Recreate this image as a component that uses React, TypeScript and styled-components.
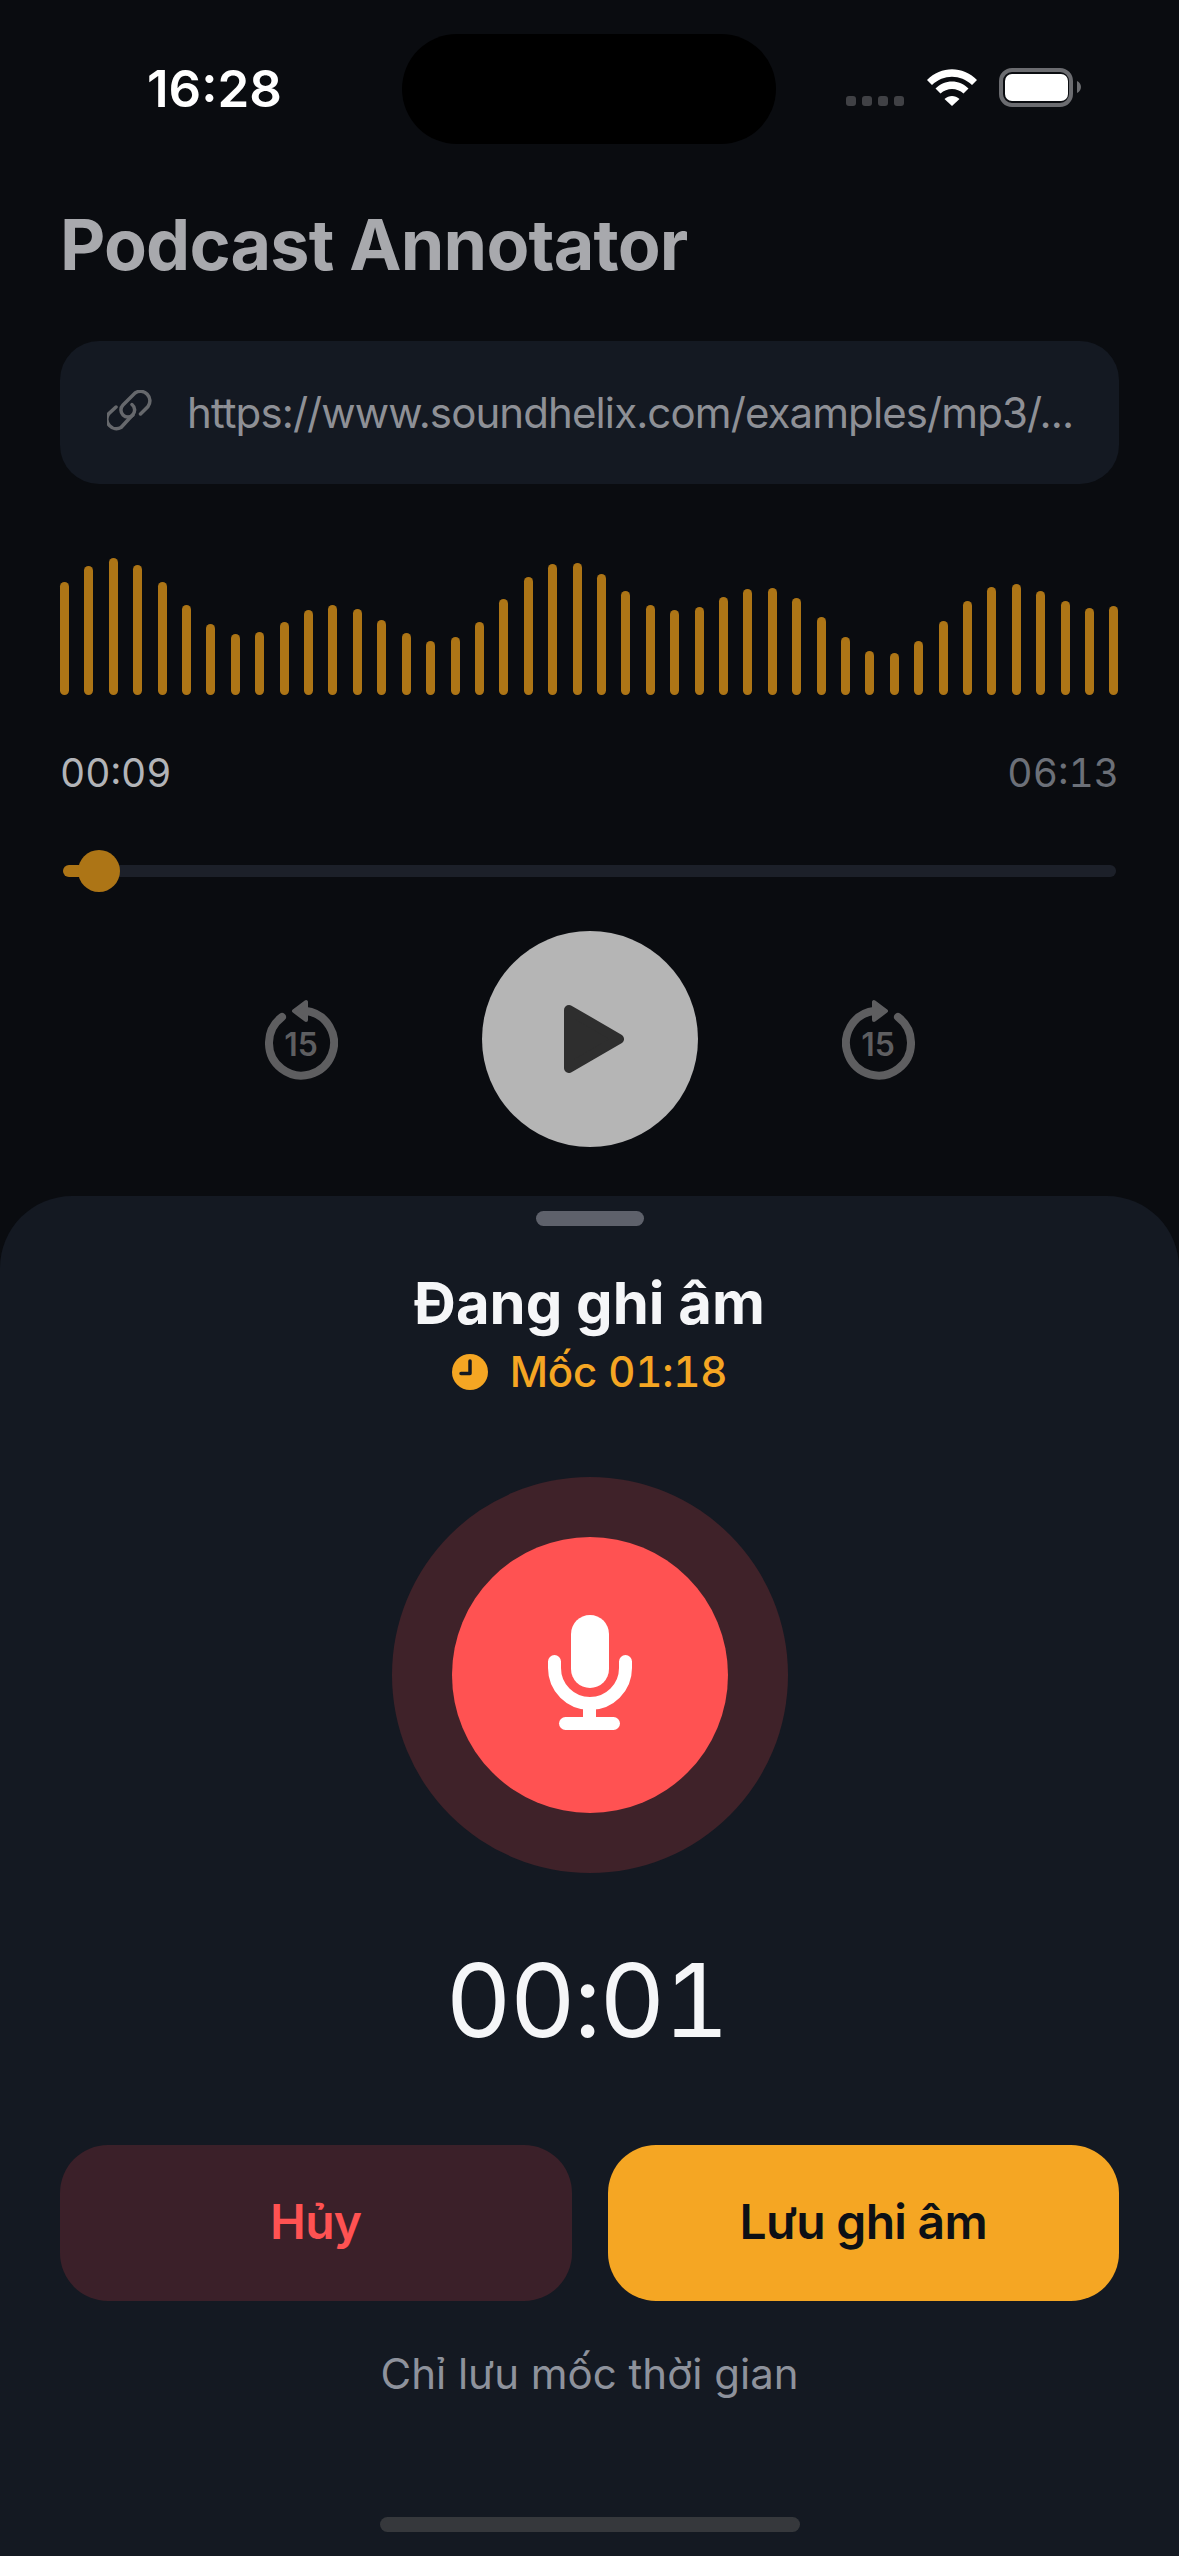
import * as React from 'react';
import styled, { createGlobalStyle } from 'styled-components';

const WAVE_HEIGHTS = [
  113, 129, 137, 130, 113, 90, 71, 61, 63, 73, 85, 90, 86, 75, 62, 54, 58, 73, 96, 118, 131, 132,
  121, 104, 90, 85, 88, 98, 106, 107, 97, 78, 58, 44, 42, 54, 74, 94, 108, 111, 104, 94, 87, 89,
];

const GlobalStyle = createGlobalStyle`
  html, body {
    margin: 0;
    padding: 0;
    background: #0a0c10;
  }

  * {
    box-sizing: border-box;
  }
`;

const Screen = styled.div`
  display: flex;
  flex-direction: column;
  width: 1179px;
  height: 2556px;
  overflow: hidden;
  background: #0a0c10;
  font-family: Inter, "Noto Sans", sans-serif;
`;

const StatusBar = styled.div`
  display: grid;
  grid-template-columns: 402px 374px 1fr;
  height: 110px;
  margin-top: 34px;
`;

const Clock = styled.div`
  align-self: center;
  padding-left: 147px;
  color: #fff;
  font-size: 51px;
  font-weight: 600;
  line-height: 60px;
`;

const Island = styled.div`
  border-radius: 55px;
  background: #000;
`;

const StatusIcons = styled.div`
  display: flex;
  align-items: flex-end;
  align-self: start;
  height: 39px;
  margin-top: 34px;
  padding-left: 70px;
`;

const SignalDots = styled.div`
  display: flex;
  gap: 6px;
  margin: 0 23px 1px 0;
`;

const SignalDot = styled.span`
  width: 10px;
  height: 10px;
  border-radius: 3px;
  background: #404145;
`;

const WifiIcon = styled.svg`
  width: 50px;
  height: 37px;
  margin: 0 22px 1px 0;
`;

const BatteryIcon = styled.svg`
  width: 82px;
  height: 39px;
`;

const Main = styled.main`
  display: flex;
  flex-direction: column;
  padding: 0 60px;
`;

const Title = styled.h1`
  margin: 61px 0 0;
  color: #a8a9ad;
  font-size: 70px;
  font-weight: 700;
  letter-spacing: -0.8px;
  line-height: 80px;
`;

const UrlField = styled.div`
  display: flex;
  align-items: center;
  gap: 35px;
  height: 143px;
  margin-top: 56px;
  padding: 0 47px;
  border-radius: 39px;
  background: #141922;
`;

const LinkIcon = styled.svg`
  flex: none;
  width: 45px;
  height: 45px;
`;

const UrlText = styled.span`
  color: #8e9096;
  font-size: 42px;
  letter-spacing: -0.9px;
  line-height: 50px;
  white-space: nowrap;
`;

const Waveform = styled.div`
  display: flex;
  align-items: flex-end;
  justify-content: space-between;
  height: 137px;
  margin-top: 74px;
`;

const WaveBar = styled.span<{ $height: number }>`
  width: 9px;
  height: ${(p) => p.$height}px;
  border-radius: 4.5px;
  background: #ad7516;
`;

const TimeRow = styled.div`
  display: flex;
  justify-content: space-between;
  margin-top: 53px;
`;

const TimeLabel = styled.span<{ $muted?: boolean }>`
  color: ${(p) => (p.$muted ? '#6c7078' : '#b2b4b8')};
  font-size: 39px;
  font-variant-numeric: tabular-nums;
  line-height: 50px;
`;

const Slider = styled.div`
  position: relative;
  display: flex;
  align-items: center;
  height: 42px;
  margin-top: 52px;
  padding: 0 3px;
`;

const SliderTrack = styled.div`
  flex: 1;
  height: 12px;
  border-radius: 6px;
  background: linear-gradient(to right, #ad7516 30px, #1c2029 30px);
`;

const SliderThumb = styled.div`
  position: absolute;
  top: 0;
  left: 18px;
  width: 42px;
  height: 42px;
  border-radius: 50%;
  background: #ad7516;
`;

const Controls = styled.div`
  display: flex;
  align-items: center;
  justify-content: center;
  gap: 144px;
  margin-top: 39px;
`;

const SkipIcon = styled.svg`
  width: 73px;
  height: 81px;
`;

const SkipLabel = styled.text`
  fill: #5e5e60;
  font-family: Inter, sans-serif;
  font-size: 32px;
  font-weight: 600;
`;

const PlayButton = styled.div`
  display: flex;
  align-items: center;
  justify-content: center;
  width: 216px;
  height: 216px;
  padding-left: 9px;
  border-radius: 50%;
  background: #b5b5b5;
`;

const PlayIcon = styled.svg`
  width: 60px;
  height: 68px;
`;

const Sheet = styled.section`
  display: flex;
  flex: 1;
  flex-direction: column;
  align-items: center;
  margin-top: 49px;
  padding: 15px 60px 24px;
  border-radius: 72px 72px 0 0;
  background: #141922;
`;

const Handle = styled.div`
  width: 108px;
  height: 15px;
  border-radius: 7.5px;
  background: #5e616b;
`;

const SheetTitle = styled.h2`
  margin: 42px 0 0;
  color: #f5f6f8;
  font-size: 58px;
  font-weight: 700;
  line-height: 70px;
`;

const Marker = styled.div`
  display: flex;
  align-items: center;
  gap: 22px;
  margin-top: 12px;
  color: #f5a623;
  font-size: 42px;
  font-variant-numeric: tabular-nums;
  font-weight: 500;
  letter-spacing: -0.2px;
  line-height: 44px;
`;

const MarkerIcon = styled.svg`
  width: 36px;
  height: 36px;
`;

const RecordHalo = styled.div`
  display: flex;
  align-items: center;
  justify-content: center;
  width: 396px;
  height: 396px;
  margin-top: 83px;
  border-radius: 50%;
  background: #3f2229;
`;

const RecordButton = styled.div`
  display: flex;
  align-items: center;
  justify-content: center;
  width: 276px;
  height: 276px;
  padding-bottom: 5px;
  border-radius: 50%;
  background: #ff5252;
`;

const MicIcon = styled.svg`
  width: 84px;
  height: 115px;
`;

const Timer = styled.div`
  margin: 67px 6px 0 0;
  color: #f5f6f8;
  font-size: 102px;
  font-variant-numeric: tabular-nums;
  font-weight: 400;
  letter-spacing: -2px;
  line-height: 120px;
`;

const Actions = styled.div`
  display: flex;
  gap: 36px;
  width: 100%;
  margin-top: 85px;
`;

const ActionButton = styled.button<{ $primary?: boolean }>`
  flex: 1;
  height: 156px;
  padding: 0 0 3px;
  border: 0;
  border-radius: 48px;
  background: ${(p) => (p.$primary ? '#f5a623' : '#3b2029')};
  color: ${(p) => (p.$primary ? '#0d1015' : '#ff5252')};
  font-family: inherit;
  font-size: 48px;
  font-weight: 600;
  letter-spacing: -0.7px;
`;

const Hint = styled.div`
  margin-top: 48px;
  color: #8e929c;
  font-size: 42px;
  line-height: 50px;
`;

const HomeIndicator = styled.div`
  width: 420px;
  height: 15px;
  margin-top: auto;
  border-radius: 8px;
  background: #36383c;
`;

const SkipGlyph = ({ forward }: { forward?: boolean }) => (
  <SkipIcon viewBox="0 0 73 81">
    <g transform={forward ? 'translate(73 0) scale(-1 1)' : undefined}>
      <path
        d="M17 18A32.5 32.5 0 1 0 40 11.7"
        fill="none"
        stroke="#5e5e60"
        strokeWidth="8"
        strokeLinecap="round"
      />
      <path
        d="M29 12 41 3V21Z"
        fill="#5e5e60"
        stroke="#5e5e60"
        strokeWidth="4"
        strokeLinejoin="round"
      />
    </g>
    <SkipLabel x="36" y="57" textAnchor="middle">
      15
    </SkipLabel>
  </SkipIcon>
);

export default function App() {
  return (
    <Screen>
      <GlobalStyle />
      <StatusBar>
        <Clock>16:28</Clock>
        <Island />
        <StatusIcons>
          <SignalDots>
            <SignalDot />
            <SignalDot />
            <SignalDot />
            <SignalDot />
          </SignalDots>
          <WifiIcon viewBox="0 0 50 37" fill="#fff">
            <path d="M0 11C14-3.5 36-3.5 50 11L45 16C33.5 5 16.5 5 5 16Z" />
            <path d="M8.5 19.5C17.5 10 32.5 10 41.5 19.5L36.5 24.5C30 18.5 20 18.5 13.5 24.5Z" />
            <path d="M17.5 30C22 26 28 26 32.5 30L25 37Z" />
          </WifiIcon>
          <BatteryIcon viewBox="0 0 82 39">
            <rect x="2" y="2" width="70" height="35" rx="11" fill="none" stroke="#6b6c70" strokeWidth="4" />
            <rect x="6" y="6" width="63" height="27" rx="7" fill="#fff" />
            <path d="M78 13C80.5 14 82 16.500 82 19S80.500 24 78 25Z" fill="#6b6c70" />
          </BatteryIcon>
        </StatusIcons>
      </StatusBar>

      <Main>
        <Title>Podcast Annotator</Title>
        <UrlField>
          <LinkIcon viewBox="17 22 45 45" fill="none" stroke="#66686c" strokeWidth="3.5" strokeLinecap="round">
            <path d="M50.500 46 58 38.500A9.500 9.500 0 0 0 45 25L33 37A7 7 0 0 0 43 47" />
            <path d="M42 36.500A7 7 0 0 1 42.500 47L31 59.500A9.500 9.500 0 0 1 18.500 46L26 39" />
          </LinkIcon>
          <UrlText>https://www.soundhelix.com/examples/mp3/...</UrlText>
        </UrlField>

        <Waveform>
          {WAVE_HEIGHTS.map((height, i) => (
            <WaveBar key={i} $height={height} />
          ))}
        </Waveform>

        <TimeRow>
          <TimeLabel>00:09</TimeLabel>
          <TimeLabel $muted>06:13</TimeLabel>
        </TimeRow>

        <Slider>
          <SliderTrack />
          <SliderThumb />
        </Slider>

        <Controls>
          <SkipGlyph />
          <PlayButton>
            <PlayIcon viewBox="0 0 60 68">
              <path
                d="M5 5 55 34 5 63Z"
                fill="#2e2e2e"
                stroke="#2e2e2e"
                strokeWidth="10"
                strokeLinejoin="round"
              />
            </PlayIcon>
          </PlayButton>
          <SkipGlyph forward />
        </Controls>
      </Main>

      <Sheet>
        <Handle />
        <SheetTitle>Đang ghi âm</SheetTitle>
        <Marker>
          <MarkerIcon viewBox="0 0 36 36">
            <circle cx="18" cy="18" r="18" fill="#f5a623" />
            <path d="M18 7V19.500H9" fill="none" stroke="#141922" strokeWidth="3.500" strokeLinecap="round" strokeLinejoin="round" />
          </MarkerIcon>
          Mốc 01:18
        </Marker>

        <RecordHalo>
          <RecordButton>
            <MicIcon viewBox="0 0 84 115" fill="#fff">
              <rect x="23" y="0" width="38" height="73" rx="19" />
              <path
                d="M6.500 46.500V53A35.500 35.500 0 0 0 77.500 53V46.500"
                fill="none"
                stroke="#fff"
                strokeWidth="13"
                strokeLinecap="round"
              />
              <rect x="35" y="90" width="13" height="15" />
              <rect x="11" y="102" width="61" height="13" rx="6.500" />
            </MicIcon>
          </RecordButton>
        </RecordHalo>

        <Timer>00:01</Timer>

        <Actions>
          <ActionButton>Hủy</ActionButton>
          <ActionButton $primary>Lưu ghi âm</ActionButton>
        </Actions>

        <Hint>Chỉ lưu mốc thời gian</Hint>
        <HomeIndicator />
      </Sheet>
    </Screen>
  );
}
